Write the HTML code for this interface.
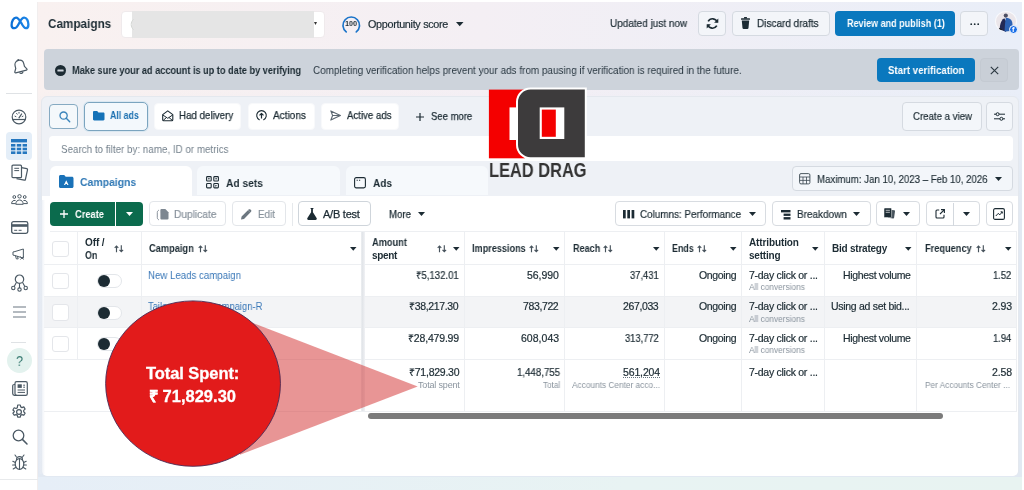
<!DOCTYPE html>
<html lang="en">
<head>
<meta charset="utf-8">
<title>Campaigns</title>
<style>
html,body{margin:0;padding:0;}
body{width:1024px;height:490px;position:relative;overflow:hidden;background:#fff;font-family:"Liberation Sans",sans-serif;color:#1c2b33;}
.t{position:absolute;white-space:pre;transform-origin:0 50%;will-change:transform;}
.a{position:absolute;box-sizing:border-box;}
.b{position:absolute;box-sizing:border-box;border-radius:4px;}
svg{position:absolute;overflow:visible;}

</style>
</head>
<body>
<div class="a" style="left:38.00px;top:2.00px;width:983.50px;height:488.00px;background:linear-gradient(90deg,#f9f1f0 0%,#f4eff4 45%,#e9eef8 100%);"></div>
<div class="a" style="left:38.00px;top:90.00px;width:983.50px;height:400.00px;background:linear-gradient(180deg,rgba(226,233,242,0) 0px,rgba(226,233,242,1) 110px);"></div>
<div class="a" style="left:38.00px;top:477.00px;width:983.50px;height:13.00px;background:linear-gradient(90deg,#e6eef7 0%,#e8f3f3 60%,#e8f3f1 100%);"></div>
<div class="a" style="left:0.00px;top:0.00px;width:38.00px;height:490.00px;background:#fff;"></div>
<div class="a" style="left:37.00px;top:2.00px;width:1.00px;height:488.00px;background:#f1eeee;"></div>
<svg style="left:9.50px;top:16.00px;" width="20" height="14" viewBox="0 0 20 14" fill="none"><defs><linearGradient id="mg" x1="0" y1="0" x2="1" y2="0"><stop offset="0" stop-color="#0a6fd6"/><stop offset="1" stop-color="#1d86e8"/></linearGradient></defs><path d="M1.6 9.2C1.6 5 3.6 1.6 6 1.6c2.2 0 3.4 2 5.2 5.2 1.6 2.9 2.7 5.4 4.6 5.4 1.6 0 2.6-1.4 2.6-3.8 0-3.6-1.8-6.8-4.2-6.8-1.7 0-3 1.6-4.4 4.2C8.300 8.700 6.900 12.200 4.400 12.200 2.600 12.200 1.600 11 1.600 9.200Z" stroke="url(#mg)" stroke-width="2.3" stroke-linejoin="round"/></svg>
<svg style="left:12.00px;top:58.00px;" width="16" height="18" viewBox="0 0 16 18" fill="none"><g transform="rotate(-14 8 9)"><path d="M8 2.2c-2.700 0-4.500 2-4.500 4.600v2.600L1.800 12.400c-.3.600 0 1.200.7 1.200h11c.7 0 1-.6.700-1.200L12.500 9.400V6.800C12.500 4.200 10.700 2.200 8 2.200Z" stroke="#4b5964" stroke-width="1.200" stroke-linejoin="round"/><path d="M6.200 14.200a1.900 1.900 0 0 0 3.600 0" stroke="#4b5964" stroke-width="1.200"/><circle cx="8" cy="1.600" r=".9" fill="#4b5964"/></g></svg>
<div class="a" style="left:6.00px;top:92.50px;width:26.00px;height:1.00px;background:#dfe2e5;"></div>
<svg style="left:11.00px;top:108.50px;" width="16" height="16" viewBox="0 0 16 16" fill="none"><circle cx="8" cy="8" r="6.800" stroke="#4b5964" stroke-width="1.200"/><path d="M1.600 10.500H14.400" stroke="#4b5964" stroke-width="1.200"/><path d="M8 8.800L10.600 5" stroke="#4b5964" stroke-width="1.300" stroke-linecap="round"/><path d="M4 7.200l.9.400M5.600 4.400l.6.800M8 3.300v.9M12 7.200l-.9.400" stroke="#4b5964" stroke-width="1" stroke-linecap="round"/></svg>
<div class="a" style="left:5.50px;top:131.50px;width:26.50px;height:28.50px;background:#e4eef8;border-radius:4px;"></div>
<svg style="left:11.00px;top:138.50px;" width="16" height="15" viewBox="0 0 16 15" fill="none"><rect x="0" y="0" width="16" height="3.400" fill="#2577bf"/><g fill="#2577bf"><rect x="0" y="5" width="4.400" height="2.600"/><rect x="5.800" y="5" width="4.400" height="2.600"/><rect x="11.600" y="5" width="4.400" height="2.600"/><rect x="0" y="8.700" width="4.400" height="2.600"/><rect x="5.800" y="8.700" width="4.400" height="2.600"/><rect x="11.600" y="8.700" width="4.400" height="2.600"/><rect x="0" y="12.400" width="4.400" height="2.600"/><rect x="5.800" y="12.400" width="4.400" height="2.600"/><rect x="11.600" y="12.400" width="4.400" height="2.600"/></g></svg>
<svg style="left:10.50px;top:163.50px;" width="18" height="18" viewBox="0 0 18 18" fill="none"><rect x="1" y="1.200" width="9.500" height="12.500" rx="1" stroke="#4b5964" stroke-width="1.200"/><path d="M10.500 3.600l5.300 1.100c.5.100.8.600.7 1.100l-2.100 9.700c-.1.500-.6.800-1.100.7L5.500 14.700" stroke="#4b5964" stroke-width="1.200" stroke-linejoin="round"/><path d="M3.300 4.300h4.800M3.300 6.600h4.800" stroke="#4b5964" stroke-width="1"/></svg>
<svg style="left:10.50px;top:194.30px;" width="17" height="11" viewBox="0 0 17 11" fill="none"><circle cx="8.500" cy="2.300" r="1.700" stroke="#4b5964" stroke-width="1"/><circle cx="3.300" cy="3" r="1.400" stroke="#4b5964" stroke-width="1"/><circle cx="13.700" cy="3" r="1.400" stroke="#4b5964" stroke-width="1"/><path d="M4.800 10.300c0-2.600 1.500-4.300 3.700-4.300s3.700 1.700 3.700 4.300Z" stroke="#4b5964" stroke-width="1" stroke-linejoin="round"/><path d="M4.600 6.600C2.300 5.900.6 7.300.6 9.600h4M12.400 6.600c2.300-.7 4 .7 4 3h-4" stroke="#4b5964" stroke-width="1" stroke-linejoin="round"/></svg>
<svg style="left:10.50px;top:220.50px;" width="17.5" height="13" viewBox="0 0 17.5 13" fill="none"><rect x=".7" y=".7" width="16.100" height="11.600" rx="1.800" stroke="#4b5964" stroke-width="1.300"/><rect x=".7" y="3.200" width="16.100" height="2.600" fill="#4b5964"/><path d="M3.200 9.300h3M7.600 9.300h3" stroke="#4b5964" stroke-width="1"/></svg>
<svg style="left:12.30px;top:248.30px;" width="14" height="12.4" viewBox="0 0 17 15" fill="none"><path d="M1.200 4.800v3.800l2.400.5L13.800 12.400V1.200L3.600 4.300Z" stroke="#4b5964" stroke-width="1.200" stroke-linejoin="round"/><path d="M4.200 9.400l1.100 3.800h2.200l-.9-3.200" stroke="#4b5964" stroke-width="1.200" stroke-linejoin="round"/><path d="M10.200 10.200l3.800 3.800M14 10.200l-3.800 3.800" stroke="#4b5964" stroke-width="1.100"/></svg>
<svg style="left:10.50px;top:273.50px;" width="17" height="18" viewBox="0 0 17 18" fill="none"><circle cx="8.500" cy="5.200" r="4.200" stroke="#4b5964" stroke-width="1.200"/><circle cx="2.300" cy="14" r="1.700" stroke="#4b5964" stroke-width="1.100"/><circle cx="8.500" cy="15.600" r="1.700" stroke="#4b5964" stroke-width="1.100"/><circle cx="14.700" cy="14" r="1.700" stroke="#4b5964" stroke-width="1.100"/><path d="M5.500 8.300L3.200 12.500M8.500 9.400v4.500M11.500 8.300l2.300 4.200" stroke="#4b5964" stroke-width="1.100"/></svg>
<svg style="left:13.00px;top:305.50px;" width="13" height="12" viewBox="0 0 13 12" fill="none"><path d="M0 1h13M0 6h13M0 11h13" stroke="#6a7782" stroke-width="1.200"/></svg>
<div class="a" style="left:11.00px;top:342.00px;width:15.00px;height:1.00px;background:#dfe2e5;"></div>
<div class="a" style="left:6.50px;top:347.50px;width:25.00px;height:25.00px;background:#e3f2ee;border-radius:50%;"></div>
<span class="t" style="left:15.50px;top:351.50px;font-size:15px;line-height:18px;font-weight:400;color:#3d7e75;transform:scaleX(0.8390);">?</span>
<svg style="left:11.50px;top:381.00px;" width="16" height="15" viewBox="0 0 16 15" fill="none"><rect x="3" y=".7" width="12.300" height="13.600" rx="1.600" stroke="#4b5964" stroke-width="1.200"/><path d="M3 3.500H2.200C1.300 3.500.7 4.100.7 5v7.600c0 1 .7 1.700 1.700 1.700H5" stroke="#4b5964" stroke-width="1.200"/><rect x="5.600" y="3.300" width="4.200" height="3.600" fill="#4b5964"/><path d="M5.600 9h7.400M5.600 11.400h7.400M11.200 4.200h1.800M11.200 6.200h1.800" stroke="#4b5964" stroke-width="1"/></svg>
<svg style="left:11.00px;top:404.00px;" width="16" height="16" viewBox="0 0 16 16" fill="none"><circle cx="8" cy="8" r="2.400" stroke="#4b5964" stroke-width="1.200"/><path d="M6.700 1h2.600l.4 1.900 1.300.7 1.800-.7 1.300 2.200-1.400 1.300v1.400l1.400 1.300-1.300 2.200-1.800-.7-1.300.7-.4 1.900H6.700l-.4-1.900-1.300-.7-1.800.7-1.300-2.200 1.400-1.300V7.300L1.900 6l1.300-2.200 1.800.7 1.300-.7Z" stroke="#4b5964" stroke-width="1.200" stroke-linejoin="round"/></svg>
<svg style="left:11.50px;top:428.50px;" width="16" height="16" viewBox="0 0 16 16" fill="none"><circle cx="6.500" cy="6.500" r="5.300" stroke="#4b5964" stroke-width="1.300"/><path d="M10.400 10.400l4.600 4.600" stroke="#4b5964" stroke-width="1.500" stroke-linecap="round"/></svg>
<svg style="left:12.00px;top:453.50px;" width="15" height="17" viewBox="0 0 15 17" fill="none"><ellipse cx="7.500" cy="10" rx="4.300" ry="5.400" stroke="#4b5964" stroke-width="1.200"/><path d="M7.500 5v10.400M4.500 5.500C4.500 3.700 5.700 2.600 7.500 2.600s3 1.100 3 2.900M4.300 2.800L3 1M10.700 2.800L12 1M3.300 8.500L.8 7.300M3.200 11H.6M3.600 13.500L1.200 15M11.700 8.500l2.500-1.200M11.800 11h2.600M11.400 13.500l2.400 1.500" stroke="#4b5964" stroke-width="1.100" stroke-linecap="round"/></svg>
<div class="a" style="left:0.00px;top:479.00px;width:38.00px;height:1.00px;background:#e8eaec;"></div>
<span class="t" style="left:47.80px;top:15.50px;font-size:13px;line-height:16px;font-weight:700;color:#1c2b33;transform:scaleX(0.9019);">Campaigns</span>
<div class="b" style="left:120.70px;top:10.70px;width:204.60px;height:27.70px;background:#fff;border:1px solid #efeaec;"></div>
<div class="a" style="left:132.40px;top:11.00px;width:181.30px;height:27.20px;background:#e5e5e5;"></div>
<svg style="left:128.50px;top:18.50px;" width="5" height="11" viewBox="0 0 5 11" fill="none"><path d="M4.500 .5C1.500 2.500 1.500 8.500 4.500 10.500" stroke="#d3d6d3" stroke-width="1"/></svg>
<svg style="left:313.70px;top:22.30px;" width="3" height="3" viewBox="0 0 3 3" fill="none"><path d="M0 0h3L1.500 3Z" fill="#333"/></svg>
<svg style="left:340.50px;top:15.50px;" width="20.5" height="17.5" viewBox="0 0 20.5 17.5" fill="none"><path d="M5.200 15.900A8.300 8.300 0 1 1 15.300 15.900" stroke="#1b74c9" stroke-width="1.700" stroke-linecap="round"/></svg>
<span class="t" style="left:345.30px;top:19.10px;font-size:8px;line-height:10px;font-weight:700;color:#1c2b33;transform:scaleX(0.8908);">100</span>
<span class="t" style="left:368.00px;top:18.10px;font-size:10.8px;line-height:13px;font-weight:400;color:#1c2b33;letter-spacing:-0.307px;-webkit-text-stroke:0.2px #1c2b33;">Opportunity score</span>
<svg style="left:455.55px;top:22.40px;" width="7.5" height="4.2" viewBox="0 0 7.5 4.2" fill="none"><path d="M0 0H7.5 L3.75 4.2 Z" fill="#1c2b33"/></svg>
<span class="t" style="left:610.30px;top:17.00px;font-size:11px;line-height:13px;font-weight:400;color:#1c2b33;transform:scaleX(0.9082);-webkit-text-stroke:0.2px #1c2b33;">Updated just now</span>
<div class="b" style="left:698.20px;top:11.00px;width:27.50px;height:24.80px;background:#f3f5f9;border:1px solid #d5dae1;"></div>
<svg style="left:705.50px;top:17.00px;" width="13" height="13" viewBox="0 0 13 13" fill="none"><path d="M11.300 5.200A5 5 0 0 0 2.200 4.300" stroke="#1c2b33" stroke-width="1.700"/><path d="M1.700 7.800A5 5 0 0 0 10.800 8.700" stroke="#1c2b33" stroke-width="1.700"/><path d="M12.300 1.600v4.200H8.100Z M.7 11.400V7.200h4.200Z" fill="#1c2b33"/></svg>
<div class="b" style="left:731.50px;top:11.00px;width:98.30px;height:24.80px;background:#f3f5f9;border:1px solid #d5dae1;"></div>
<svg style="left:740.50px;top:17.00px;" width="9" height="12" viewBox="0 0 9 12" fill="none"><path d="M.8 3.600h7.400l-.7 7.400c-.1.600-.5 1-1.100 1H2.600c-.6 0-1-.4-1.100-1Z" fill="#1c2b33"/><rect x="0" y="1.300" width="9" height="1.500" rx=".4" fill="#1c2b33"/><rect x="3" y="0" width="3" height="1.600" rx=".4" fill="#1c2b33"/></svg>
<span class="t" style="left:757.00px;top:17.00px;font-size:11px;line-height:13px;font-weight:400;color:#1c2b33;transform:scaleX(0.9078);-webkit-text-stroke:0.25px #1c2b33;">Discard drafts</span>
<div class="b" style="left:835.20px;top:10.70px;width:120.30px;height:25.10px;background:#0a78be;"></div>
<span class="t" style="left:846.50px;top:17.00px;font-size:11px;line-height:13px;font-weight:700;color:#fff;transform:scaleX(0.8206);">Review and publish (1)</span>
<div class="b" style="left:960.40px;top:11.00px;width:27.70px;height:24.80px;background:#f3f5f9;border:1px solid #d5dae1;"></div>
<svg style="left:969.50px;top:22.50px;" width="9.5" height="2.4" viewBox="0 0 9.5 2.4" fill="none"><circle cx="1.200" cy="1.200" r=".9" fill="#1c2b33"/><circle cx="4.700" cy="1.200" r=".9" fill="#1c2b33"/><circle cx="8.200" cy="1.200" r=".9" fill="#1c2b33"/></svg>
<div class="a" style="left:994.50px;top:10.90px;width:22.20px;height:21.60px;background:#ebe6ea;border-radius:50%;border:1px solid #f8f9fc;"></div>
<svg style="left:994.50px;top:10.90px;" width="22" height="21.5" viewBox="0 0 22 21.5" fill="none"><clipPath id="av"><circle cx="11" cy="10.750" r="10.300"/></clipPath><g clip-path="url(#av)"><circle cx="10.800" cy="4.600" r="2.100" fill="#4d4f63"/><path d="M9.300 7.200c-2.200 1-3.600 3.600-4.200 7.400l-.5 3.600 6.400 2.800 1.500-8.500Z" fill="#232a55"/><path d="M10.800 6.800c2.600 0 5.600 1.200 6.400 4.200l1 9.500H9.500l.6-8.500Z" fill="#2c62b3"/><path d="M4 17.500l3 1.200" stroke="#222" stroke-width="1.200"/></g></svg>
<div class="a" style="left:1008.60px;top:24.60px;width:9.40px;height:9.40px;background:#1a6fe8;border-radius:50%;border:1px solid #fff;"></div>
<span class="t" style="left:1012.00px;top:25.30px;font-size:7.5px;line-height:9px;font-weight:700;color:#fff;letter-spacing:0.300px;">f</span>
<div class="a" style="left:43.50px;top:49.00px;width:975.00px;height:41.00px;background:#cdd3db;border-radius:4px;"></div>
<svg style="left:55.00px;top:64.50px;" width="11" height="11" viewBox="0 0 11 11" fill="none"><circle cx="5.500" cy="5.500" r="5.500" fill="#1c2b33"/><rect x="2.400" y="4.600" width="6.200" height="1.800" rx=".5" fill="#cdd3db"/></svg>
<span class="t" style="left:72.30px;top:63.50px;font-size:11px;line-height:13px;font-weight:700;color:#1c2b33;transform:scaleX(0.8343);">Make sure your ad account is up to date by verifying</span>
<span class="t" style="left:313.00px;top:63.50px;font-size:11px;line-height:13px;font-weight:400;color:#2a3842;transform:scaleX(0.9022);">Completing verification helps prevent your ads from pausing if verification is required in the future.</span>
<div class="b" style="left:877.40px;top:58.00px;width:97.30px;height:24.00px;background:#0a78be;"></div>
<span class="t" style="left:888.00px;top:63.50px;font-size:11px;line-height:13px;font-weight:700;color:#fff;transform:scaleX(0.8812);">Start verification</span>
<div class="b" style="left:979.70px;top:58.00px;width:28.30px;height:24.00px;background:#c9cfd7;border:1px solid #c4cad2;"></div>
<svg style="left:989.50px;top:65.50px;" width="9" height="9" viewBox="0 0 9 9" fill="none"><path d="M.8.800l7.400 7.400M8.200.8L.8 8.200" stroke="#2c3942" stroke-width="1.150"/></svg>
<div class="a" style="left:41.00px;top:96.30px;width:977.50px;height:380.20px;background:#eef1f6;border:1px solid #e4e8ee;border-radius:6px;"></div>
<div class="a" style="left:42.00px;top:195.50px;width:975.50px;height:280.00px;background:#fff;border-radius:0 0 5px 5px;"></div>
<div class="a" style="left:38.00px;top:200.00px;width:7.00px;height:274.00px;background:linear-gradient(90deg,#e1e7f1 0%,#e6ebf3 35%,rgba(255,255,255,0) 100%);"></div>
<div class="b" style="left:49.30px;top:103.50px;width:28.70px;height:25.00px;background:#f4f8fb;border:1px solid #86aac2;"></div>
<svg style="left:58.50px;top:110.50px;" width="11.5" height="11.5" viewBox="0 0 11.5 11.5" fill="none"><circle cx="4.600" cy="4.600" r="3.600" stroke="#3a84bb" stroke-width="1.300"/><path d="M7.300 7.300l3.400 3.400" stroke="#3a84bb" stroke-width="1.400" stroke-linecap="round"/></svg>
<div class="b" style="left:83.50px;top:101.50px;width:64.70px;height:29.00px;background:#f3f8fc;border:1px solid #7ba4bf;box-shadow:0 0 0 1px #dbe8f1;border-radius:5px;"></div>
<svg style="left:92.50px;top:110.50px;" width="11.5" height="9.5" viewBox="0 0 11.5 9.5" fill="none"><path d="M0 1.200C0 .5.500 0 1.200 0h3l1.200 1.400h4.900c.7 0 1.200.5 1.200 1.200v5.700c0 .7-.5 1.200-1.200 1.200H1.200C.5 9.500 0 9 0 8.300Z" fill="#1472b8"/></svg>
<span class="t" style="left:110.00px;top:108.80px;font-size:11px;line-height:13px;font-weight:700;color:#1a6fb0;transform:scaleX(0.7983);">All ads</span>
<div class="b" style="left:153.70px;top:103.00px;width:87.60px;height:26.80px;background:#fff;border:1px solid #f8f9fb;"></div>
<svg style="left:161.70px;top:109.50px;" width="11.5" height="11.5" viewBox="0 0 11.5 11.5" fill="none"><path d="M.7 4.600L5.750.9l5.050 3.700v5.200c0 .6-.4 1-1 1H1.700c-.6 0-1-.4-1-1Z" stroke="#1c2b33" stroke-width="1.100" stroke-linejoin="round"/><path d="M.9 5l4.850 3.300L10.600 5M1.200 10.400l3.400-3M10.300 10.400l-3.400-3" stroke="#1c2b33" stroke-width="1"/></svg>
<span class="t" style="left:178.80px;top:109.00px;font-size:11px;line-height:13px;font-weight:400;color:#1c2b33;transform:scaleX(0.8865);-webkit-text-stroke:0.25px #1c2b33;">Had delivery</span>
<div class="b" style="left:247.50px;top:103.00px;width:67.00px;height:26.80px;background:#fff;border:1px solid #f8f9fb;"></div>
<svg style="left:256.00px;top:110.00px;" width="11" height="11" viewBox="0 0 11 11" fill="none"><path d="M3.300 9.700A4.800 4.800 0 1 1 7.700 9.700" stroke="#1c2b33" stroke-width="1.100" stroke-linecap="round"/><path d="M5.500 8.600V3.400M3.500 5.300l2-2 2 2" stroke="#1c2b33" stroke-width="1.200" stroke-linejoin="round"/></svg>
<span class="t" style="left:273.30px;top:108.50px;font-size:11px;line-height:13px;font-weight:400;color:#1c2b33;transform:scaleX(0.9147);-webkit-text-stroke:0.25px #1c2b33;">Actions</span>
<div class="b" style="left:321.30px;top:103.00px;width:78.20px;height:26.80px;background:#fff;border:1px solid #f8f9fb;"></div>
<svg style="left:329.50px;top:110.00px;" width="11" height="11" viewBox="0 0 11 11" fill="none"><path d="M.8.900l9.600 4.600L.8 10.100l1.800-4.600Z M2.600 5.500h7" stroke="#5b6771" stroke-width="1.100" stroke-linejoin="round"/></svg>
<span class="t" style="left:346.80px;top:108.50px;font-size:11px;line-height:13px;font-weight:400;color:#1c2b33;transform:scaleX(0.8768);-webkit-text-stroke:0.25px #1c2b33;">Active ads</span>
<svg style="left:415.80px;top:112.50px;" width="8" height="8" viewBox="0 0 8 8" fill="none"><path d="M4 0v8M0 4h8" stroke="#1c2b33" stroke-width="1.200"/></svg>
<span class="t" style="left:430.80px;top:110.00px;font-size:11px;line-height:13px;font-weight:400;color:#1c2b33;transform:scaleX(0.8637);-webkit-text-stroke:0.25px #1c2b33;">See more</span>
<div class="b" style="left:901.50px;top:102.00px;width:80.50px;height:28.50px;background:#f3f6fa;border:1px solid #d5dae1;"></div>
<span class="t" style="left:912.50px;top:110.00px;font-size:11px;line-height:13px;font-weight:400;color:#1c2b33;transform:scaleX(0.8771);-webkit-text-stroke:0.2px #1c2b33;">Create a view</span>
<div class="b" style="left:986.00px;top:102.00px;width:26.80px;height:28.50px;background:#f3f6fa;border:1px solid #d5dae1;"></div>
<svg style="left:994.00px;top:111.50px;" width="11" height="9" viewBox="0 0 11 9" fill="none"><path d="M0 2.200h11M0 6.800h11" stroke="#1c2b33" stroke-width="1"/><circle cx="3.600" cy="2.200" r="1.500" fill="#f3f6fa" stroke="#1c2b33" stroke-width="1"/><circle cx="7.400" cy="6.800" r="1.500" fill="#f3f6fa" stroke="#1c2b33" stroke-width="1"/></svg>
<div class="a" style="left:49.30px;top:136.00px;width:964.10px;height:25.00px;background:#fff;border-radius:4px;"></div>
<span class="t" style="left:61.30px;top:141.50px;font-size:11.5px;line-height:14px;font-weight:400;color:#75828d;transform:scaleX(0.8537);">Search to filter by: name, ID or metrics</span>
<div class="a" style="left:49.50px;top:166.30px;width:142.30px;height:30.70px;background:#fff;border-radius:6px 6px 0 0;"></div>
<svg style="left:58.80px;top:175.00px;" width="14.5" height="13" viewBox="0 0 14.5 13" fill="none"><path d="M0 1.500C0 .7.700 0 1.500 0h3.700l1.500 1.700H13c.8 0 1.500.7 1.500 1.500v8.300c0 .8-.7 1.500-1.500 1.500H1.500C.7 13 0 12.300 0 11.500Z" fill="#1a72b8"/><path d="M7.250 5.200l2.300 4.800H8.300l-.4-.9H6.600l-.4.900H4.950Z" fill="#fff"/></svg>
<span class="t" style="left:80.00px;top:174.50px;font-size:11.5px;line-height:14px;font-weight:700;color:#2f78b5;transform:scaleX(0.9081);">Campaigns</span>
<div class="a" style="left:197.00px;top:166.30px;width:142.50px;height:29.20px;background:#f6f9fc;border-radius:6px 6px 0 0;"></div>
<svg style="left:206.30px;top:176.30px;" width="13" height="12.5" viewBox="0 0 13 12.5" fill="none"><g stroke="#1c2b33" stroke-width="1.100"><rect x=".6" y=".6" width="4.600" height="4.400" rx=".8"/><rect x="7.800" y=".6" width="4.600" height="4.400" rx=".8"/><rect x=".6" y="7.500" width="4.600" height="4.400" rx=".8"/><rect x="7.800" y="7.500" width="4.600" height="4.400" rx=".8"/></g><path d="M9.300 8.700v2l1.800-1Z" fill="#1c2b33"/><circle cx="2.900" cy="2.800" r=".8" fill="#1c2b33"/><circle cx="10.100" cy="2.800" r=".8" fill="#1c2b33"/></svg>
<span class="t" style="left:225.50px;top:175.80px;font-size:11.8px;line-height:14px;font-weight:700;color:#1c2b33;transform:scaleX(0.8680);">Ad sets</span>
<div class="a" style="left:345.60px;top:166.30px;width:142.20px;height:29.20px;background:#f6f9fc;border-radius:6px 6px 0 0;"></div>
<svg style="left:354.00px;top:176.50px;" width="12" height="11.5" viewBox="0 0 12 11.5" fill="none"><rect x=".6" y=".6" width="10.800" height="10.300" rx="1.600" stroke="#1c2b33" stroke-width="1.100"/><path d="M2.600 3.300h1.200M5 3.300h1.200" stroke="#1c2b33" stroke-width="1.100"/></svg>
<span class="t" style="left:373.00px;top:175.60px;font-size:11.8px;line-height:14px;font-weight:700;color:#1c2b33;transform:scaleX(0.8521);">Ads</span>
<div class="b" style="left:792.00px;top:166.00px;width:221.00px;height:24.50px;background:#f3f6fa;border:1px solid #d5dae1;"></div>
<svg style="left:799.00px;top:173.00px;" width="11.5" height="11.5" viewBox="0 0 11.5 11.5" fill="none"><rect x=".6" y=".6" width="10.300" height="10.300" rx="1.400" stroke="#3a4750" stroke-width=".9"/><path d="M.6 4h10.300M.6 7.400h10.300M4 4v6.900M7.500 4v6.900" stroke="#3a4750" stroke-width=".8"/></svg>
<span class="t" style="left:817.40px;top:172.50px;font-size:10.8px;line-height:13px;font-weight:400;color:#1c2b33;transform:scaleX(0.8939);-webkit-text-stroke:0.15px #1c2b33;">Maximum: Jan 10, 2023 – Feb 10, 2026</span>
<svg style="left:995.10px;top:177.00px;" width="7" height="4" viewBox="0 0 7 4" fill="none"><path d="M0 0H7 L3.5 4 Z" fill="#1c2b33"/></svg>
<svg style="left:487.00px;top:87.00px;" width="102" height="73" viewBox="0 0 102 73" fill="none"><rect x="1.900" y="2.600" width="36" height="68.700" fill="#f40000"/><rect x="22.500" y="20.400" width="8" height="32.600" fill="#fff"/><path d="M98.800 1.600V71.300H43.500c-7.400 0-13.500-6.100-13.500-13.500V15.100c0-7.400 6.100-13.500 13.500-13.500Z" fill="#3d3b3c" stroke="#fff" stroke-width="2"/><rect x="52.700" y="20.400" width="24.600" height="31.600" fill="#fff"/><rect x="54.800" y="22.600" width="14" height="27.200" fill="#f40000"/></svg>
<span class="t" style="left:489.40px;top:157.60px;font-size:20px;line-height:24px;font-weight:700;color:#343434;transform:scaleX(0.8201);">LEAD DRAG</span>
<div class="a" style="left:49.50px;top:201.50px;width:65.00px;height:24.80px;background:#0b6b4d;border-radius:4px 0 0 4px;"></div>
<div class="a" style="left:116.00px;top:201.50px;width:27.30px;height:24.80px;background:#0b6b4d;border-radius:0 4px 4px 0;"></div>
<svg style="left:59.50px;top:210.00px;" width="8" height="8" viewBox="0 0 8 8" fill="none"><path d="M4 0v8M0 4h8" stroke="#fff" stroke-width="1.300"/></svg>
<span class="t" style="left:74.50px;top:207.50px;font-size:11px;line-height:13px;font-weight:700;color:#fff;transform:scaleX(0.8467);">Create</span>
<svg style="left:126.20px;top:212.20px;" width="7" height="4" viewBox="0 0 7 4" fill="none"><path d="M0 0H7 L3.5 4 Z" fill="#fff"/></svg>
<div class="b" style="left:148.80px;top:201.30px;width:77.60px;height:24.70px;background:#fff;border:1px solid #e3e6ea;"></div>
<svg style="left:157.00px;top:208.50px;" width="11.5" height="11.5" viewBox="0 0 11.5 11.5" fill="none"><path d="M4.300 0h4l3.200 3.200v6.300c0 .5-.4.900-.9.900H4.300c-.5 0-.9-.4-.9-.9V.9c0-.5.400-.9.900-.9Z" fill="#7d8791"/><path d="M2 1.200C.9 1.500.3 2.300.3 3.400v5.200c0 1.100.6 1.900 1.700 2.200" stroke="#7d8791" stroke-width=".9"/></svg>
<span class="t" style="left:173.70px;top:207.50px;font-size:11px;line-height:13px;font-weight:400;color:#87919b;transform:scaleX(0.9267);-webkit-text-stroke:0.2px #87919b;">Duplicate</span>
<div class="b" style="left:232.30px;top:201.30px;width:54.20px;height:24.70px;background:#fff;border:1px solid #e3e6ea;"></div>
<svg style="left:241.00px;top:208.80px;" width="10.5" height="10.5" viewBox="0 0 10.5 10.5" fill="none"><path d="M0 10.500l.6-3L6.900 1.200l2.400 2.400L3 9.900Z M7.700.5c.5-.5 1.200-.5 1.700 0l.6.600c.5.500.5 1.200 0 1.700l-.6.600-2.400-2.400Z" fill="#6c7780"/></svg>
<span class="t" style="left:257.80px;top:207.50px;font-size:11px;line-height:13px;font-weight:400;color:#87919b;transform:scaleX(0.8962);-webkit-text-stroke:0.2px #87919b;">Edit</span>
<div class="a" style="left:292.00px;top:202.50px;width:1.00px;height:23.00px;background:#e6e9ec;"></div>
<div class="b" style="left:298.20px;top:201.30px;width:72.80px;height:24.70px;background:#fff;border:1px solid #cfd5db;"></div>
<svg style="left:307.00px;top:208.00px;" width="10" height="12" viewBox="0 0 10 12" fill="none"><path d="M3.600 0h2.800v.9h-.5v3.300l3.700 5.800c.6.900 0 2-1.100 2H1.500c-1.100 0-1.700-1.100-1.100-2l3.700-5.800V.9h-.5Z" fill="#1c2b33"/><path d="M3 7.300h4l1.500 2.500H1.500Z" fill="#fff" opacity=".0"/></svg>
<span class="t" style="left:323.00px;top:207.50px;font-size:11px;line-height:13px;font-weight:400;color:#1c2b33;letter-spacing:-0.229px;-webkit-text-stroke:0.25px #1c2b33;">A/B test</span>
<span class="t" style="left:388.50px;top:207.50px;font-size:11px;line-height:13px;font-weight:400;color:#1c2b33;transform:scaleX(0.8738);-webkit-text-stroke:0.25px #1c2b33;">More</span>
<svg style="left:418.00px;top:212.00px;" width="7" height="4" viewBox="0 0 7 4" fill="none"><path d="M0 0H7 L3.5 4 Z" fill="#1c2b33"/></svg>
<div class="b" style="left:615.00px;top:201.30px;width:151.00px;height:25.00px;background:#fff;border:1px solid #d8dce1;"></div>
<svg style="left:623.00px;top:209.80px;" width="11.3" height="8.4" viewBox="0 0 11.3 8.4" fill="none"><rect x="0" y="0" width="2.700" height="8.400" fill="#1c2b33"/><rect x="4.300" y="0" width="2.700" height="8.400" fill="#1c2b33"/><rect x="8.600" y="0" width="2.700" height="8.400" fill="#1c2b33"/></svg>
<span class="t" style="left:640.20px;top:207.80px;font-size:10.8px;line-height:13px;font-weight:400;color:#1c2b33;transform:scaleX(0.9147);-webkit-text-stroke:0.2px #1c2b33;">Columns: Performance</span>
<svg style="left:749.10px;top:212.30px;" width="7" height="4" viewBox="0 0 7 4" fill="none"><path d="M0 0H7 L3.5 4 Z" fill="#1c2b33"/></svg>
<div class="b" style="left:771.60px;top:201.30px;width:99.20px;height:25.00px;background:#fff;border:1px solid #d8dce1;"></div>
<svg style="left:780.70px;top:209.50px;" width="9.5" height="9.5" viewBox="0 0 9.5 9.5" fill="none"><rect x="0" y="0" width="9.500" height="2.400" fill="#1c2b33"/><rect x="2.600" y="3.600" width="6.900" height="2.300" fill="#1c2b33"/><rect x="2.600" y="7.100" width="6.900" height="2.400" fill="#1c2b33"/></svg>
<span class="t" style="left:796.50px;top:207.80px;font-size:10.8px;line-height:13px;font-weight:400;color:#1c2b33;transform:scaleX(0.9235);-webkit-text-stroke:0.2px #1c2b33;">Breakdown</span>
<svg style="left:853.30px;top:212.30px;" width="7" height="4" viewBox="0 0 7 4" fill="none"><path d="M0 0H7 L3.5 4 Z" fill="#1c2b33"/></svg>
<div class="b" style="left:876.00px;top:201.30px;width:44.00px;height:25.00px;background:#fff;border:1px solid #d8dce1;"></div>
<svg style="left:884.20px;top:208.30px;" width="11.5" height="10.6" viewBox="0 0 11.5 10.6" fill="none"><path d="M3.600 1.400l6.700.9c.5.100.8.500.7 1l-.9 6.400c-.1.500-.5.800-1 .7l-5.200-.7Z" fill="#46525b"/><rect x="0" y="0" width="7.600" height="9.600" rx=".9" fill="#1c2b33" stroke="#fff" stroke-width=".5"/><path d="M1.700 2.300h4.200M1.700 4.300h4.200" stroke="#fff" stroke-width=".8" opacity=".85"/></svg>
<svg style="left:903.10px;top:212.30px;" width="7" height="4" viewBox="0 0 7 4" fill="none"><path d="M0 0H7 L3.5 4 Z" fill="#1c2b33"/></svg>
<div class="b" style="left:925.60px;top:201.30px;width:54.90px;height:25.00px;background:#fff;border:1px solid #d8dce1;"></div>
<div class="a" style="left:952.70px;top:202.50px;width:1.00px;height:23.20px;background:#d3d8de;"></div>
<svg style="left:934.50px;top:208.60px;" width="10" height="10" viewBox="0 0 10 10" fill="none"><path d="M4.200 1H2C1.400 1 1 1.400 1 2v6c0 .6.400 1 1 1h6c.6 0 1-.4 1-1V5.800" stroke="#1c2b33" stroke-width="1.100"/><path d="M6 .6h3.400V4M9.200.8L5 5" stroke="#1c2b33" stroke-width="1.100"/></svg>
<svg style="left:962.90px;top:212.30px;" width="7" height="4" viewBox="0 0 7 4" fill="none"><path d="M0 0H7 L3.5 4 Z" fill="#1c2b33"/></svg>
<div class="b" style="left:986.00px;top:201.30px;width:27.00px;height:25.00px;background:#fff;border:1px solid #d8dce1;"></div>
<svg style="left:993.30px;top:208.00px;" width="12" height="12" viewBox="0 0 12 12" fill="none"><rect x=".6" y=".6" width="10.800" height="10.800" rx="1.500" stroke="#1c2b33" stroke-width="1.100"/><path d="M2.800 8l2.400-2.600 1.700 1.400 2.300-2.900M7.600 3.800h1.700v1.700" stroke="#1c2b33" stroke-width="1"/></svg>
<div class="a" style="left:43.50px;top:296.00px;width:973.00px;height:31.50px;background:#f3f4f6;"></div>
<div class="a" style="left:49.50px;top:231.30px;width:967.00px;height:1.00px;background:#edeff2;"></div>
<div class="a" style="left:43.50px;top:264.00px;width:973.00px;height:1.00px;background:#edeff2;"></div>
<div class="a" style="left:43.50px;top:295.50px;width:973.00px;height:1.00px;background:#edeff2;"></div>
<div class="a" style="left:43.50px;top:327.00px;width:973.00px;height:1.00px;background:#edeff2;"></div>
<div class="a" style="left:43.50px;top:358.90px;width:973.00px;height:1.00px;background:#edeff2;"></div>
<div class="a" style="left:43.50px;top:410.80px;width:973.00px;height:1.00px;background:#edeff2;"></div>
<div class="a" style="left:76.50px;top:232.00px;width:1.00px;height:127.40px;background:#edeff2;"></div>
<div class="a" style="left:141.25px;top:232.00px;width:1.00px;height:127.40px;background:#edeff2;"></div>
<div class="a" style="left:463.90px;top:232.00px;width:1.00px;height:179.30px;background:#edeff2;"></div>
<div class="a" style="left:563.90px;top:232.00px;width:1.00px;height:179.30px;background:#edeff2;"></div>
<div class="a" style="left:664.10px;top:232.00px;width:1.00px;height:179.30px;background:#edeff2;"></div>
<div class="a" style="left:740.80px;top:232.00px;width:1.00px;height:179.30px;background:#edeff2;"></div>
<div class="a" style="left:824.10px;top:232.00px;width:1.00px;height:179.30px;background:#edeff2;"></div>
<div class="a" style="left:916.10px;top:232.00px;width:1.00px;height:179.30px;background:#edeff2;"></div>
<div class="a" style="left:1015.80px;top:232.00px;width:1.00px;height:179.30px;background:#edeff2;"></div>
<div class="a" style="left:361.30px;top:232.00px;width:3.70px;height:179.30px;background:linear-gradient(90deg,#eceef1,#e2e5e9 40%,#f1f2f5);"></div>
<div class="a" style="left:52.00px;top:240.50px;width:16.60px;height:16.50px;background:#fff;border:1px solid #e4e6ea;border-radius:3px;"></div>
<span class="t" style="left:85.00px;top:237.00px;font-size:10px;line-height:12px;font-weight:700;color:#1c2b33;letter-spacing:-0.100px;">Off /</span>
<span class="t" style="left:85.00px;top:249.60px;font-size:10px;line-height:12px;font-weight:700;color:#1c2b33;transform:scaleX(0.8927);">On</span>
<svg style="left:114.00px;top:244.60px;" width="10" height="7.5" viewBox="0 0 10 7.5" fill="none"><path d="M2.500 7.300V1M.7 2.800L2.500 1l1.800 1.800M7.300.3v6.300M5.500 4.900l1.800 1.800 1.800-1.800" stroke="#47535c" stroke-width="1.150"/></svg>
<span class="t" style="left:149.40px;top:242.60px;font-size:10px;line-height:12px;font-weight:700;color:#1c2b33;transform:scaleX(0.9267);">Campaign</span>
<svg style="left:197.60px;top:244.60px;" width="10" height="7.5" viewBox="0 0 10 7.5" fill="none"><path d="M2.500 7.300V1M.7 2.800L2.500 1l1.800 1.800M7.300.3v6.300M5.500 4.900l1.800 1.800 1.800-1.800" stroke="#47535c" stroke-width="1.150"/></svg>
<svg style="left:349.55px;top:247.10px;" width="6.5" height="3.8" viewBox="0 0 6.5 3.8" fill="none"><path d="M0 0H6.5 L3.25 3.8 Z" fill="#1c2b33"/></svg>
<span class="t" style="left:372.30px;top:237.30px;font-size:10px;line-height:12px;font-weight:700;color:#1c2b33;transform:scaleX(0.9237);">Amount</span>
<span class="t" style="left:372.30px;top:250.00px;font-size:10px;line-height:12px;font-weight:700;color:#1c2b33;letter-spacing:-0.354px;">spent</span>
<svg style="left:436.50px;top:244.60px;" width="10" height="7.5" viewBox="0 0 10 7.5" fill="none"><path d="M2.500 7.300V1M.7 2.800L2.500 1l1.800 1.800M7.300.3v6.300M5.500 4.900l1.800 1.800 1.800-1.800" stroke="#47535c" stroke-width="1.150"/></svg>
<svg style="left:452.75px;top:247.10px;" width="6.5" height="3.8" viewBox="0 0 6.5 3.8" fill="none"><path d="M0 0H6.5 L3.25 3.8 Z" fill="#1c2b33"/></svg>
<span class="t" style="left:471.60px;top:242.60px;font-size:10px;line-height:12px;font-weight:700;color:#1c2b33;transform:scaleX(0.9114);">Impressions</span>
<svg style="left:529.00px;top:244.60px;" width="10" height="7.5" viewBox="0 0 10 7.5" fill="none"><path d="M2.500 7.300V1M.7 2.800L2.500 1l1.800 1.800M7.300.3v6.300M5.500 4.900l1.800 1.800 1.800-1.800" stroke="#47535c" stroke-width="1.150"/></svg>
<svg style="left:552.75px;top:247.10px;" width="6.5" height="3.8" viewBox="0 0 6.5 3.8" fill="none"><path d="M0 0H6.5 L3.25 3.8 Z" fill="#1c2b33"/></svg>
<span class="t" style="left:572.70px;top:242.60px;font-size:10px;line-height:12px;font-weight:700;color:#1c2b33;transform:scaleX(0.9062);">Reach</span>
<svg style="left:603.00px;top:244.60px;" width="10" height="7.5" viewBox="0 0 10 7.5" fill="none"><path d="M2.500 7.300V1M.7 2.800L2.500 1l1.800 1.800M7.300.3v6.300M5.500 4.900l1.800 1.800 1.800-1.800" stroke="#47535c" stroke-width="1.150"/></svg>
<svg style="left:652.75px;top:247.10px;" width="6.5" height="3.8" viewBox="0 0 6.5 3.8" fill="none"><path d="M0 0H6.5 L3.25 3.8 Z" fill="#1c2b33"/></svg>
<span class="t" style="left:672.00px;top:242.60px;font-size:10px;line-height:12px;font-weight:700;color:#1c2b33;transform:scaleX(0.8874);">Ends</span>
<svg style="left:697.00px;top:244.60px;" width="10" height="7.5" viewBox="0 0 10 7.5" fill="none"><path d="M2.500 7.300V1M.7 2.800L2.500 1l1.800 1.800M7.300.3v6.300M5.500 4.900l1.800 1.800 1.800-1.800" stroke="#47535c" stroke-width="1.150"/></svg>
<svg style="left:730.25px;top:247.10px;" width="6.5" height="3.8" viewBox="0 0 6.5 3.8" fill="none"><path d="M0 0H6.5 L3.25 3.8 Z" fill="#1c2b33"/></svg>
<span class="t" style="left:749.40px;top:237.00px;font-size:10px;line-height:12px;font-weight:700;color:#1c2b33;letter-spacing:-0.118px;">Attribution</span>
<span class="t" style="left:749.40px;top:250.00px;font-size:10px;line-height:12px;font-weight:700;color:#1c2b33;letter-spacing:-0.212px;">setting</span>
<svg style="left:811.75px;top:247.10px;" width="6.5" height="3.8" viewBox="0 0 6.5 3.8" fill="none"><path d="M0 0H6.5 L3.25 3.8 Z" fill="#1c2b33"/></svg>
<span class="t" style="left:832.00px;top:242.60px;font-size:10px;line-height:12px;font-weight:700;color:#1c2b33;letter-spacing:-0.225px;">Bid strategy</span>
<svg style="left:904.75px;top:247.10px;" width="6.5" height="3.8" viewBox="0 0 6.5 3.8" fill="none"><path d="M0 0H6.5 L3.25 3.8 Z" fill="#1c2b33"/></svg>
<span class="t" style="left:924.70px;top:242.60px;font-size:10px;line-height:12px;font-weight:700;color:#1c2b33;transform:scaleX(0.9233);">Frequency</span>
<svg style="left:975.50px;top:244.60px;" width="10" height="7.5" viewBox="0 0 10 7.5" fill="none"><path d="M2.500 7.300V1M.7 2.800L2.500 1l1.800 1.800M7.300.3v6.300M5.500 4.900l1.800 1.800 1.800-1.800" stroke="#47535c" stroke-width="1.150"/></svg>
<svg style="left:1005.35px;top:247.10px;" width="6.5" height="3.8" viewBox="0 0 6.5 3.8" fill="none"><path d="M0 0H6.5 L3.25 3.8 Z" fill="#1c2b33"/></svg>
<div class="a" style="left:52.00px;top:272.50px;width:16.60px;height:16.50px;background:#fff;border:1px solid #e4e6ea;border-radius:3px;"></div>
<div class="a" style="left:97.00px;top:274.10px;width:25.00px;height:14.20px;background:#fff;border:1px solid #e3e6ea;border-radius:8px;"></div>
<div class="a" style="left:97.80px;top:275.10px;width:12.00px;height:12.00px;background:#1c2b33;border-radius:50%;"></div>
<div class="a" style="left:52.00px;top:304.10px;width:16.60px;height:16.50px;background:#fff;border:1px solid #e4e6ea;border-radius:3px;"></div>
<div class="a" style="left:97.00px;top:305.70px;width:25.00px;height:14.20px;background:#fff;border:1px solid #e3e6ea;border-radius:8px;"></div>
<div class="a" style="left:97.80px;top:306.70px;width:12.00px;height:12.00px;background:#1c2b33;border-radius:50%;"></div>
<div class="a" style="left:52.00px;top:335.50px;width:16.60px;height:16.50px;background:#fff;border:1px solid #e4e6ea;border-radius:3px;"></div>
<div class="a" style="left:97.00px;top:337.10px;width:25.00px;height:14.20px;background:#fff;border:1px solid #e3e6ea;border-radius:8px;"></div>
<div class="a" style="left:97.80px;top:338.10px;width:12.00px;height:12.00px;background:#1c2b33;border-radius:50%;"></div>
<span class="t" style="left:148.00px;top:268.50px;font-size:11px;line-height:13px;font-weight:400;color:#3a78b8;transform:scaleX(0.8790);">New Leads campaign</span>
<span class="t" style="left:148.00px;top:300.40px;font-size:11px;line-height:13px;font-weight:400;color:#3a78b8;transform:scaleX(0.8542);">Tailored Leads campaign-R</span>
<span class="t" style="left:148.00px;top:331.80px;font-size:11px;line-height:13px;font-weight:400;color:#3a78b8;transform:scaleX(0.8918);">Leads campaign</span>
<span class="t" style="left:416.00px;top:268.80px;font-size:10.5px;line-height:13px;font-weight:400;color:#1c2b33;transform:scaleX(0.9120);-webkit-text-stroke:0.2px #1c2b33;">₹5,132.01</span>
<span class="t" style="left:526.90px;top:268.80px;font-size:10.5px;line-height:13px;font-weight:400;color:#1c2b33;letter-spacing:-0.046px;-webkit-text-stroke:0.2px #1c2b33;">56,990</span>
<span class="t" style="left:630.00px;top:268.80px;font-size:10.5px;line-height:13px;font-weight:400;color:#1c2b33;transform:scaleX(0.8949);-webkit-text-stroke:0.2px #1c2b33;">37,431</span>
<span class="t" style="left:699.30px;top:268.80px;font-size:10.5px;line-height:13px;font-weight:400;color:#1c2b33;letter-spacing:-0.358px;-webkit-text-stroke:0.2px #1c2b33;">Ongoing</span>
<span class="t" style="left:748.60px;top:268.80px;font-size:10.5px;line-height:13px;font-weight:400;color:#1c2b33;letter-spacing:-0.268px;-webkit-text-stroke:0.2px #1c2b33;">7-day click or ...</span>
<span class="t" style="left:748.60px;top:282.40px;font-size:9px;line-height:11px;font-weight:400;color:#8a949e;transform:scaleX(0.9235);">All conversions</span>
<span class="t" style="left:842.80px;top:268.80px;font-size:10.5px;line-height:13px;font-weight:400;color:#1c2b33;letter-spacing:-0.341px;-webkit-text-stroke:0.2px #1c2b33;">Highest volume</span>
<span class="t" style="left:993.30px;top:268.80px;font-size:10.5px;line-height:13px;font-weight:400;color:#1c2b33;transform:scaleX(0.8954);-webkit-text-stroke:0.2px #1c2b33;">1.52</span>
<span class="t" style="left:409.40px;top:300.40px;font-size:10.5px;line-height:13px;font-weight:400;color:#1c2b33;letter-spacing:-0.337px;-webkit-text-stroke:0.2px #1c2b33;">₹38,217.30</span>
<span class="t" style="left:523.40px;top:300.40px;font-size:10.5px;line-height:13px;font-weight:400;color:#1c2b33;letter-spacing:-0.374px;-webkit-text-stroke:0.2px #1c2b33;">783,722</span>
<span class="t" style="left:623.40px;top:300.40px;font-size:10.5px;line-height:13px;font-weight:400;color:#1c2b33;letter-spacing:-0.374px;-webkit-text-stroke:0.2px #1c2b33;">267,033</span>
<span class="t" style="left:699.30px;top:300.40px;font-size:10.5px;line-height:13px;font-weight:400;color:#1c2b33;letter-spacing:-0.358px;-webkit-text-stroke:0.2px #1c2b33;">Ongoing</span>
<span class="t" style="left:748.60px;top:300.40px;font-size:10.5px;line-height:13px;font-weight:400;color:#1c2b33;letter-spacing:-0.268px;-webkit-text-stroke:0.2px #1c2b33;">7-day click or ...</span>
<span class="t" style="left:748.60px;top:314.00px;font-size:9px;line-height:11px;font-weight:400;color:#8a949e;transform:scaleX(0.9235);">All conversions</span>
<span class="t" style="left:830.80px;top:300.40px;font-size:10.5px;line-height:13px;font-weight:400;color:#1c2b33;letter-spacing:-0.292px;-webkit-text-stroke:0.2px #1c2b33;">Using ad set bid...</span>
<span class="t" style="left:991.50px;top:300.40px;font-size:10.5px;line-height:13px;font-weight:400;color:#1c2b33;letter-spacing:-0.084px;-webkit-text-stroke:0.2px #1c2b33;">2.93</span>
<span class="t" style="left:407.80px;top:331.80px;font-size:10.5px;line-height:13px;font-weight:400;color:#1c2b33;letter-spacing:-0.177px;-webkit-text-stroke:0.2px #1c2b33;">₹28,479.99</span>
<span class="t" style="left:520.60px;top:331.80px;font-size:10.5px;line-height:13px;font-weight:400;color:#1c2b33;letter-spacing:0.026px;-webkit-text-stroke:0.2px #1c2b33;">608,043</span>
<span class="t" style="left:625.00px;top:331.80px;font-size:10.5px;line-height:13px;font-weight:400;color:#1c2b33;transform:scaleX(0.8889);-webkit-text-stroke:0.2px #1c2b33;">313,772</span>
<span class="t" style="left:699.30px;top:331.80px;font-size:10.5px;line-height:13px;font-weight:400;color:#1c2b33;letter-spacing:-0.358px;-webkit-text-stroke:0.2px #1c2b33;">Ongoing</span>
<span class="t" style="left:748.60px;top:331.80px;font-size:10.5px;line-height:13px;font-weight:400;color:#1c2b33;letter-spacing:-0.268px;-webkit-text-stroke:0.2px #1c2b33;">7-day click or ...</span>
<span class="t" style="left:748.60px;top:345.40px;font-size:9px;line-height:11px;font-weight:400;color:#8a949e;transform:scaleX(0.9235);">All conversions</span>
<span class="t" style="left:842.80px;top:331.80px;font-size:10.5px;line-height:13px;font-weight:400;color:#1c2b33;letter-spacing:-0.341px;-webkit-text-stroke:0.2px #1c2b33;">Highest volume</span>
<span class="t" style="left:993.30px;top:331.80px;font-size:10.5px;line-height:13px;font-weight:400;color:#1c2b33;transform:scaleX(0.8954);-webkit-text-stroke:0.2px #1c2b33;">1.94</span>
<span class="t" style="left:409.40px;top:365.50px;font-size:10.5px;line-height:13px;font-weight:400;color:#1c2b33;letter-spacing:-0.242px;-webkit-text-stroke:0.2px #1c2b33;">₹71,829.30</span>
<span class="t" style="left:418.00px;top:379.80px;font-size:9px;line-height:11px;font-weight:400;color:#8a949e;letter-spacing:-0.166px;">Total spent</span>
<span class="t" style="left:516.60px;top:365.50px;font-size:10.5px;line-height:13px;font-weight:400;color:#1c2b33;transform:scaleX(0.9225);-webkit-text-stroke:0.2px #1c2b33;">1,448,755</span>
<span class="t" style="left:542.50px;top:379.80px;font-size:9px;line-height:11px;font-weight:400;color:#8a949e;transform:scaleX(0.9045);">Total</span>
<span class="t" style="left:623.00px;top:365.50px;font-size:10.5px;line-height:13px;font-weight:400;color:#1c2b33;letter-spacing:-0.138px;-webkit-text-stroke:0.2px #1c2b33;text-decoration:underline dotted #65727d;text-underline-offset:1px;">561,204</span>
<span class="t" style="left:572.00px;top:379.80px;font-size:9px;line-height:11px;font-weight:400;color:#8a949e;transform:scaleX(0.9210);">Accounts Center acco...</span>
<span class="t" style="left:748.60px;top:365.50px;font-size:10.5px;line-height:13px;font-weight:400;color:#1c2b33;letter-spacing:-0.268px;-webkit-text-stroke:0.2px #1c2b33;">7-day click or ...</span>
<span class="t" style="left:992.00px;top:365.50px;font-size:10.5px;line-height:13px;font-weight:400;color:#1c2b33;letter-spacing:-0.109px;-webkit-text-stroke:0.2px #1c2b33;">2.58</span>
<span class="t" style="left:924.50px;top:379.80px;font-size:9px;line-height:11px;font-weight:400;color:#8a949e;transform:scaleX(0.9185);">Per Accounts Center ...</span>
<div class="a" style="left:367.50px;top:412.80px;width:575.50px;height:6.20px;background:#7b7b7b;border-radius:3.500px;"></div>
<svg style="left:100.00px;top:295.00px;" width="330" height="180" viewBox="0 0 330 180" fill="none"><path d="M140 23L317.700 91.400 140 159.800Z" fill="rgba(214,62,62,0.55)"/><ellipse cx="93.050" cy="88.600" rx="87.400" ry="82.700" fill="#e21b1b" stroke="#4a2a55" stroke-width="0.9"/></svg>
<span class="t" style="left:146.30px;top:362.60px;font-size:16.5px;line-height:20px;font-weight:700;color:#fff;letter-spacing:-0.067px;-webkit-text-stroke:0.3px #fff;">Total Spent:</span>
<span class="t" style="left:149.00px;top:386.20px;font-size:16.5px;line-height:20px;font-weight:700;color:#fff;-webkit-text-stroke:0.3px #fff;">₹ 71,829.30</span>
</body>
</html>
